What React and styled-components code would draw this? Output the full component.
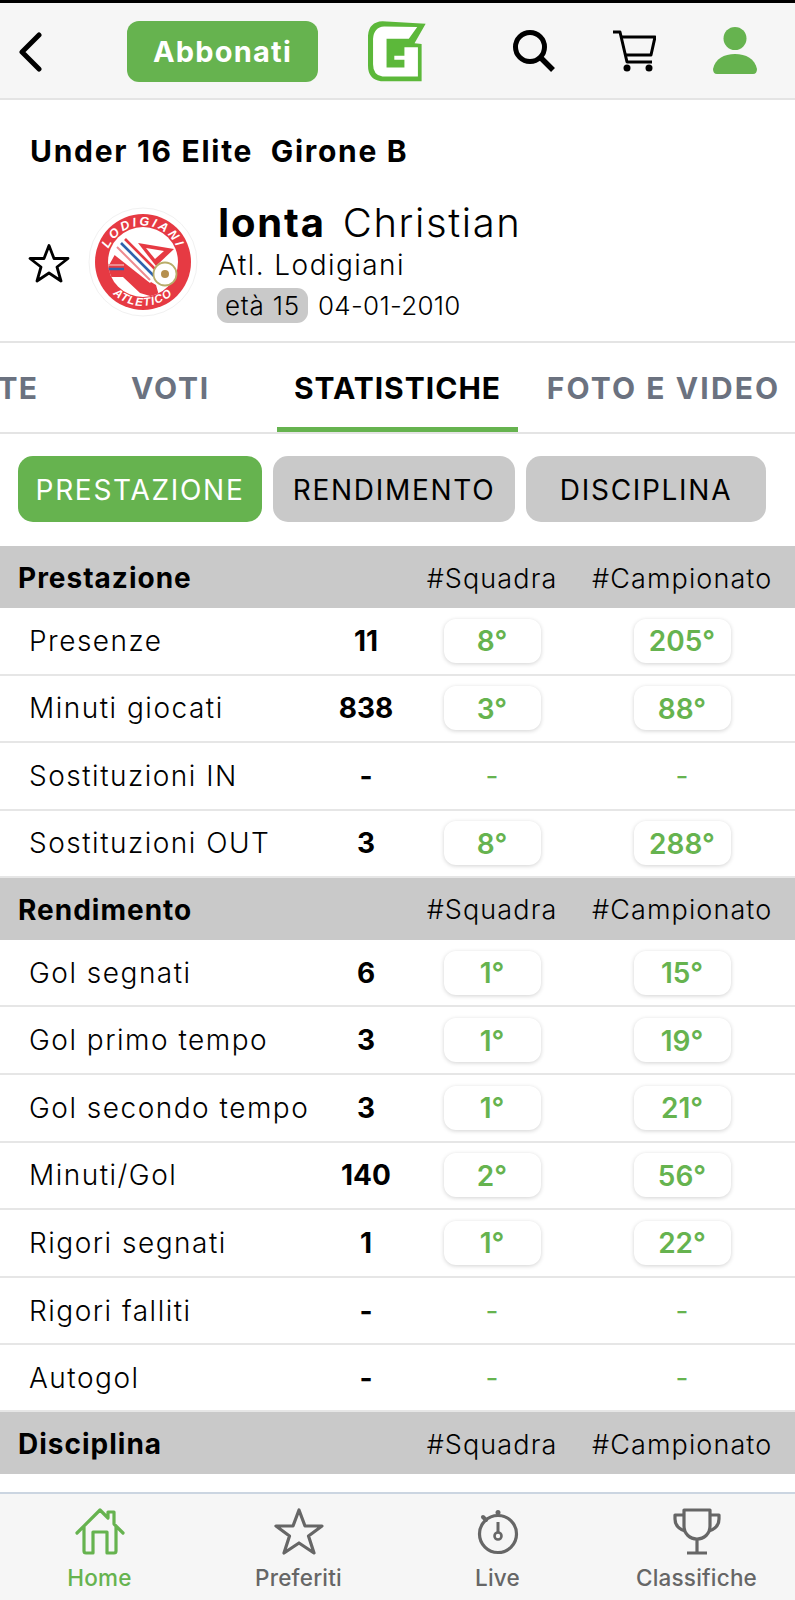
import styled, { createGlobalStyle } from "styled-components";

const GREEN = "#66b34f";
const GREY = "#c9c9c9";
const RED = "#e63a43";

const sections = [
  {
    title: "Prestazione",
    rows: [
      ["Presenze", "11", "8°", "205°"],
      ["Minuti giocati", "838", "3°", "88°"],
      ["Sostituzioni IN", "-", "-", "-"],
      ["Sostituzioni OUT", "3", "8°", "288°"],
    ],
  },
  {
    title: "Rendimento",
    rows: [
      ["Gol segnati", "6", "1°", "15°"],
      ["Gol primo tempo", "3", "1°", "19°"],
      ["Gol secondo tempo", "3", "1°", "21°"],
      ["Minuti/Gol", "140", "2°", "56°"],
      ["Rigori segnati", "1", "1°", "22°"],
      ["Rigori falliti", "-", "-", "-"],
      ["Autogol", "-", "-", "-"],
    ],
  },
  { title: "Disciplina", rows: [] },
];

function Rank({ value }) {
  if (value === "-") return <NoRank>-</NoRank>;
  return <RankBadge>{value}</RankBadge>;
}

function ClubLogo() {
  return (
    <LogoSvg viewBox="0 0 110 110">
      <defs>
        <path id="arcTop" d="M19.500 66 A37 37 0 1 1 90.500 66" />
        <path id="arcBottom" d="M12 62 A43.500 43.500 0 0 0 98 62" />
        <clipPath id="disc">
          <circle cx="55" cy="55" r="35" />
        </clipPath>
      </defs>
      <circle cx="55" cy="55" r="54" fill="#fff" stroke="#f1f1f1" strokeWidth="1" />
      <circle cx="55" cy="55" r="48" fill={RED} />
      <circle cx="55" cy="55" r="35" fill="#fff" />
      <text fontFamily="Liberation Sans, sans-serif" fontStyle="italic" fontWeight="700" fontSize="12.5" fill="#fff" letterSpacing="2.6">
        <textPath href="#arcTop" startOffset="50%" textAnchor="middle">LODIGIANI</textPath>
      </text>
      <text fontFamily="Liberation Sans, sans-serif" fontStyle="italic" fontWeight="700" fontSize="11.5" fill="#fff" letterSpacing="1.2">
        <textPath href="#arcBottom" startOffset="50%" textAnchor="middle">ATLETICO</textPath>
      </text>
      <g clipPath="url(#disc)">
        <path d="M10 70 H35 L52 86 L72 92 L68 78 L58 72 L44 58 L30 42 L20 60 H10 Z" fill={RED} />
        <path d="M24 46 L36 34 L70 68 L62 76 Z" fill="#fff" />
        <path d="M37 32 L70 65" stroke={RED} strokeWidth="2.6" />
        <path d="M33 36 L66 69" stroke="#2f62ad" strokeWidth="2.6" />
        <path d="M29 40 L62 73" stroke="#ee8a8f" strokeWidth="2" />
        <path d="M50 36 L86 42 L68 59 Z" fill={RED} />
        <path d="M58 41 L76 44 L67 52 Z" fill="#fff" />
        <path d="M8 58 H36" stroke="#ee8a8f" strokeWidth="2" />
        <path d="M8 62 H36" stroke="#2f62ad" strokeWidth="2.6" />
        <path d="M8 65.500 H36" stroke={RED} strokeWidth="2" />
      </g>
      <circle cx="77" cy="67" r="11.500" fill="#fff" stroke="#b9ad6a" strokeWidth="1.8" />
      <circle cx="77" cy="67" r="4" fill="#b58f4e" />
    </LogoSvg>
  );
}

export default function App() {
  return (
    <Page>
      <GlobalStyle />
      <StatusLine />
      <TopBar>
        <BackIcon viewBox="0 0 24 40">
          <path d="M21 3 L4 20 L21 37" fill="none" stroke="#000" strokeWidth="5" strokeLinecap="round" strokeLinejoin="round" />
        </BackIcon>
        <SubscribeButton>Abbonati</SubscribeButton>
        <BrandLogo viewBox="57 33 172 179">
          <path d="M100 33 L228 40 L195 98 L216 100 L216 211 L95 211 Q57 205 57 165 L57 75 Q60 35 100 33 Z" fill="#5cb83a" />
          <path d="M105 48 L203 50 L178 85 L112 85 L112 170 L165 170 L165 147 L135 147 L135 135 L165 135 L165 110 L205 110 L205 197 L100 197 Q72 192 72 160 L72 85 Q74 50 105 48 Z" fill="#fff" />
        </BrandLogo>
        <SearchIcon viewBox="0 0 44 44">
          <circle cx="18" cy="18" r="14.500" fill="none" stroke="#000" strokeWidth="5" />
          <path d="M29 29 L41 41" stroke="#000" strokeWidth="5.500" />
        </SearchIcon>
        <CartIcon viewBox="0 0 44 42">
          <path d="M1 2 H8 L15 32 H40" fill="none" stroke="#000" strokeWidth="3" strokeLinejoin="round" />
          <path d="M9 7 H43 L39 25 H13" fill="none" stroke="#000" strokeWidth="3" strokeLinejoin="round" />
          <circle cx="15" cy="38" r="3.500" fill="#000" />
          <circle cx="37" cy="38" r="3.500" fill="#000" />
        </CartIcon>
        <UserIcon viewBox="0 0 44 47">
          <circle cx="22" cy="11.500" r="11.500" fill={GREEN} />
          <path d="M0 42 C2 32 11 27 22 27 C33 27 42 32 44 42 Q44 47 40 47 H4 Q0 47 0 42 Z" fill={GREEN} />
        </UserIcon>
      </TopBar>

      <League>Under 16 Elite&nbsp;&nbsp;Girone B</League>

      <PlayerRow>
        <FavIcon viewBox="0 0 42 40">
          <path d="M21 2.500 L26 15.500 L40 15.500 L29 24 L33 38 L21 30 L9 38 L13 24 L2 15.500 L16 15.500 Z" fill="none" stroke="#000" strokeWidth="2.800" strokeLinejoin="round" />
        </FavIcon>
        <ClubLogo />
        <PlayerInfo>
          <PlayerName>
            <b>Ionta</b>
            <span>Christian</span>
          </PlayerName>
          <ClubName>Atl. Lodigiani</ClubName>
          <AgeLine>
            <AgePill>età 15</AgePill>
            <span>04-01-2010</span>
          </AgeLine>
        </PlayerInfo>
      </PlayerRow>

      <TabBar>
        <Tab $width={185} $track={1}>PARTITE</Tab>
        <Tab $width={213} $track={1.8}>VOTI</Tab>
        <Tab $width={241} $track={1} $active>STATISTICHE</Tab>
        <Tab $width={291} $track={2.1}>FOTO E VIDEO</Tab>
      </TabBar>

      <FilterRow>
        <FilterPill $width={244} $active>PRESTAZIONE</FilterPill>
        <FilterPill $width={242}>RENDIMENTO</FilterPill>
        <FilterPill $width={240}>DISCIPLINA</FilterPill>
      </FilterRow>

      <Stats>
        {sections.map((section) => (
          <section key={section.title}>
            <SectionHead>
              <strong>{section.title}</strong>
              <span />
              <HeadCol>#Squadra</HeadCol>
              <HeadCol>#Campionato</HeadCol>
            </SectionHead>
            {section.rows.map(([label, value, team, league], i) => (
              <StatRow key={label} $last={i === section.rows.length - 1}>
                <StatLabel>{label}</StatLabel>
                <StatValue>{value}</StatValue>
                <Rank value={team} />
                <Rank value={league} />
              </StatRow>
            ))}
          </section>
        ))}
      </Stats>

      <BottomNav>
        <NavItem $active>
          <NavSvg viewBox="0 0 50 47">
            <path d="M2 25 L25 2 L33 10 V4 H39 V16 L48 25 M9 19 V43 Q9 45 11 45 H18 V24 H32 V45 H39 Q41 45 41 43 V19" fill="none" stroke="currentColor" strokeWidth="3.200" strokeLinecap="round" strokeLinejoin="round" />
          </NavSvg>
          Home
        </NavItem>
        <NavItem>
          <NavSvg viewBox="0 0 50 47">
            <path d="M25 2 L31 18 L48 18 L34.500 28 L40 45 L25 35 L10 45 L15.500 28 L2 18 L19 18 Z" fill="none" stroke="currentColor" strokeWidth="3.200" strokeLinejoin="round" />
          </NavSvg>
          Preferiti
        </NavItem>
        <NavItem>
          <NavSvg viewBox="0 0 50 47">
            <circle cx="25" cy="26" r="18.500" fill="none" stroke="currentColor" strokeWidth="3.200" />
            <path d="M25 14 V25" stroke="currentColor" strokeWidth="3" />
            <circle cx="25" cy="28" r="3.500" fill="none" stroke="currentColor" strokeWidth="2.600" />
            <circle cx="25" cy="4.500" r="2.500" fill="currentColor" />
            <path d="M10 9 L13 12" stroke="currentColor" strokeWidth="4" strokeLinecap="round" />
          </NavSvg>
          Live
        </NavItem>
        <NavItem>
          <NavSvg viewBox="0 0 50 47">
            <path d="M12 2 H38 V18 C38 26 32 31 25 31 C18 31 12 26 12 18 Z M25 31 V44 M15 45 H35" fill="none" stroke="currentColor" strokeWidth="3.200" strokeLinejoin="round" />
            <path d="M12 7 H3 V11 C3 17 7 21 13 23 M38 7 H47 V11 C47 17 43 21 37 23" fill="none" stroke="currentColor" strokeWidth="3.200" strokeLinejoin="round" />
          </NavSvg>
          Classifiche
        </NavItem>
      </BottomNav>
    </Page>
  );
}

const GlobalStyle = createGlobalStyle`
  html, body {
    margin: 0;
    padding: 0;
    background: #fff;
  }
  * {
    box-sizing: border-box;
  }
`;

const Page = styled.div`
  width: 795px;
  height: 1600px;
  display: flex;
  flex-direction: column;
  overflow: hidden;
  font-family: "Inter", "Noto Sans", sans-serif;
  color: #000;
`;
const StatusLine = styled.div`
  height: 3px;
  flex: none;
  background: #000;
`;
const TopBar = styled.header`
  height: 97px;
  flex: none;
  padding: 2px 0 0 18px;
  display: flex;
  align-items: center;
  background: #f6f6f6;
  border-bottom: 2px solid #e4e4e4;
`;
const BackIcon = styled.svg`
  width: 24px;
  height: 40px;
`;
const SubscribeButton = styled.div`
  width: 191px;
  height: 61px;
  margin-left: 85px;
  display: flex;
  align-items: center;
  justify-content: center;
  background: ${GREEN};
  border-radius: 12px;
  color: #fff;
  font-size: 29px;
  font-weight: 700;
  letter-spacing: 1.2px;
`;
const BrandLogo = styled.svg`
  width: 58px;
  height: 61px;
  margin-left: 50px;
`;
const SearchIcon = styled.svg`
  width: 44px;
  height: 44px;
  margin-left: 86px;
  margin-top: -2px;
`;
const CartIcon = styled.svg`
  width: 44px;
  height: 42px;
  margin-left: 56px;
  margin-top: -2px;
`;
const UserIcon = styled.svg`
  width: 44px;
  height: 47px;
  margin-left: 57px;
  margin-top: -2px;
`;
const League = styled.h1`
  margin: 0;
  padding: 31px 0 0 30px;
  height: 74px;
  flex: none;
  font-size: 30px;
  line-height: 40px;
  font-weight: 700;
  letter-spacing: 1.7px;
`;
const PlayerRow = styled.div`
  height: 169px;
  flex: none;
  padding: 0 0 0 28px;
  display: flex;
  align-items: flex-start;
  border-bottom: 2px solid #e4e4e4;
`;
const FavIcon = styled.svg`
  width: 42px;
  height: 40px;
  margin-top: 69px;
`;
const LogoSvg = styled.svg`
  width: 110px;
  height: 110px;
  margin: 33px 0 0 18px;
`;
const PlayerInfo = styled.div`
  margin: 26px 0 0 20px;
  display: flex;
  flex-direction: column;
`;
const PlayerName = styled.div`
  display: flex;
  gap: 17px;
  height: 46px;
  font-size: 40px;
  line-height: 46px;
  b {
    font-weight: 700;
    letter-spacing: 1.8px;
  }
  span {
    font-weight: 300;
    letter-spacing: 1.6px;
  }
`;
const ClubName = styled.div`
  font-size: 28px;
  line-height: 38px;
  font-weight: 300;
  letter-spacing: 1.450px;
`;
const AgeLine = styled.div`
  display: flex;
  align-items: center;
  gap: 10px;
  margin-top: 4px;
  font-size: 26px;
  font-weight: 300;
  letter-spacing: 0.3px;
`;
const AgePill = styled.span`
  height: 35px;
  width: 91px;
  margin-left: -1px;
  display: flex;
  align-items: center;
  justify-content: center;
  background: ${GREY};
  border-radius: 11px;
  letter-spacing: 0.8px;
`;
const TabBar = styled.nav`
  height: 91px;
  flex: none;
  display: flex;
  margin-left: -121px;
  border-bottom: 2px solid #e4e4e4;
`;
const Tab = styled.div`
  flex: none;
  width: ${(p) => p.$width}px;
  display: flex;
  align-items: center;
  justify-content: center;
  padding-top: 5px;
  font-size: 30px;
  font-weight: 700;
  letter-spacing: ${(p) => p.$track}px;
  white-space: nowrap;
  color: ${(p) => (p.$active ? "#000" : "#6b7280")};
  border-bottom: 5px solid ${(p) => (p.$active ? GREEN : "transparent")};
`;
const FilterRow = styled.div`
  height: 112px;
  flex: none;
  padding: 22px 0 0 18px;
  display: flex;
  align-items: flex-start;
  gap: 11px;
`;
const FilterPill = styled.div`
  width: ${(p) => p.$width}px;
  height: 66px;
  padding-top: 2px;
  display: flex;
  align-items: center;
  justify-content: center;
  border-radius: 15px;
  font-size: 28px;
  font-weight: 400;
  letter-spacing: 1.7px;
  background: ${(p) => (p.$active ? GREEN : GREY)};
  color: ${(p) => (p.$active ? "#fff" : "#000")};
`;
const Stats = styled.main`
  flex: 1;
  overflow: hidden;
`;
const columns = "52px 200px 180px";
const SectionHead = styled.div`
  height: 62px;
  padding: 2px 23px 0 18px;
  display: grid;
  grid-template-columns: 322px ${columns};
  align-items: center;
  background: ${GREY};
  strong {
    font-size: 28px;
    font-weight: 700;
    letter-spacing: 1px;
  }
`;
const HeadCol = styled.span`
  text-align: center;
  font-size: 27px;
  font-weight: 300;
  letter-spacing: 1.1px;
  white-space: nowrap;
`;
const StatRow = styled.div`
  height: ${(p) => (p.$last ? 67 : 67.6)}px;
  padding: 0 23px 0 29px;
  display: grid;
  grid-template-columns: 311px ${columns};
  align-items: center;
  justify-items: start;
  font-size: 28px;
  font-weight: 300;
  border-bottom: 2px solid #e6e6e6;
  white-space: nowrap;
`;
const StatLabel = styled.span`
  letter-spacing: 1.5px;
`;
const StatValue = styled.span`
  justify-self: center;
  font-weight: 700;
`;
const RankBadge = styled.span`
  justify-self: center;
  width: 97px;
  height: 44px;
  padding-top: 1px;
  display: flex;
  align-items: center;
  justify-content: center;
  background: #fff;
  border-radius: 12px;
  box-shadow: 0 1px 4px rgba(0, 0, 0, 0.18);
  color: ${GREEN};
  font-weight: 600;
`;
const NoRank = styled.span`
  justify-self: center;
  color: ${GREEN};
  font-weight: 400;
`;
const BottomNav = styled.footer`
  height: 108px;
  flex: none;
  padding-top: 14px;
  display: grid;
  grid-template-columns: repeat(4, 199px);
  background: #f6f6f6;
  border-top: 2px solid #cbd5e1;
`;
const NavItem = styled.div`
  display: flex;
  flex-direction: column;
  align-items: center;
  gap: 10px;
  font-size: 22.500px;
  font-weight: 500;
  letter-spacing: 0.2px;
  line-height: 26px;
  color: ${(p) => (p.$active ? GREEN : "#666")};
`;
const NavSvg = styled.svg`
  width: 50px;
  height: 47px;
`;
